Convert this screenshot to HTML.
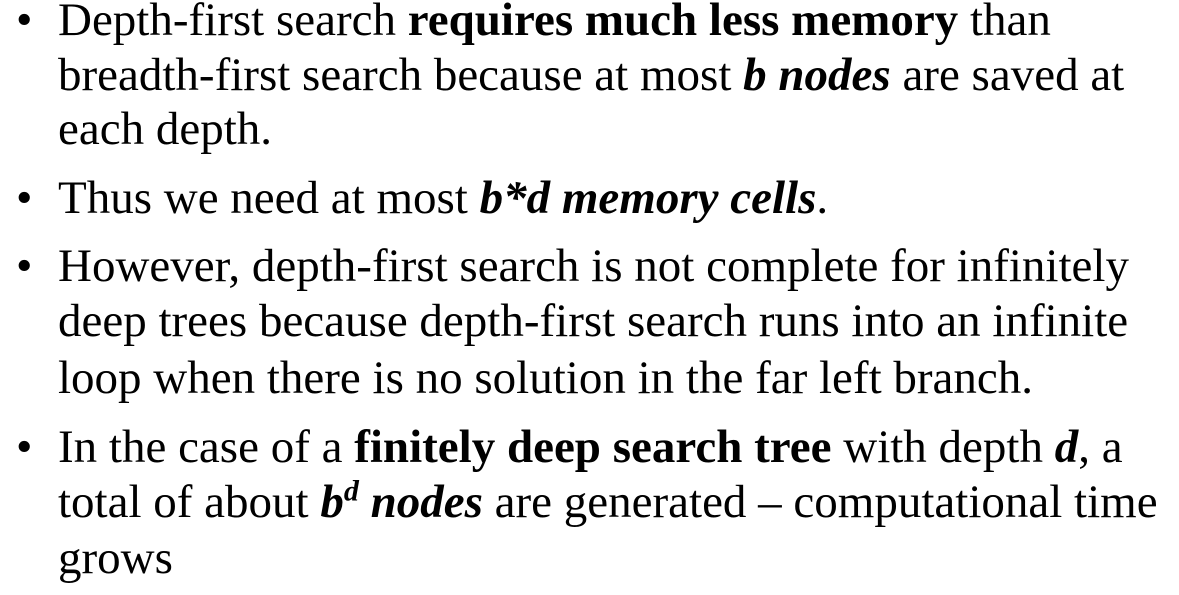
<!DOCTYPE html>
<html><head><meta charset="utf-8"><style>
body{margin:0;width:1179px;height:595px;background:#fff;overflow:hidden;position:relative;font-family:"Liberation Serif",serif;font-size:47px;color:#000}
.l{position:absolute;left:58px;line-height:50px;white-space:nowrap}
.b{position:absolute;left:16px;line-height:50px}
sup{font-size:30px;line-height:0;vertical-align:0.55em}
</style></head><body>
<div class="b" style="top:-5px">•</div>
<div class="l" style="top:-5px">Depth-first search <b>requires much less memory</b> than</div>
<div class="l" style="top:50px">breadth-first search because at most <b><i>b nodes</i></b> are saved at</div>
<div class="l" style="top:104px">each depth.</div>
<div class="b" style="top:173px">•</div>
<div class="l" style="top:173px">Thus we need at most <b><i>b*d memory cells</i></b>.</div>
<div class="b" style="top:241px">•</div>
<div class="l" style="top:241px">However, depth-first search is not complete for infinitely</div>
<div class="l" style="top:296px">deep trees because depth-first search runs into an infinite</div>
<div class="l" style="top:353px">loop when there is no solution in the far left branch.</div>
<div class="b" style="top:422px">•</div>
<div class="l" style="top:422px">In the case of a <b>finitely deep search tree</b> with depth <b><i>d</i></b>, a</div>
<div class="l" style="top:477px">total of about <b><i>b<sup>d</sup> nodes</i></b> are generated – computational time</div>
<div class="l" style="top:533px">grows</div>
</body></html>
